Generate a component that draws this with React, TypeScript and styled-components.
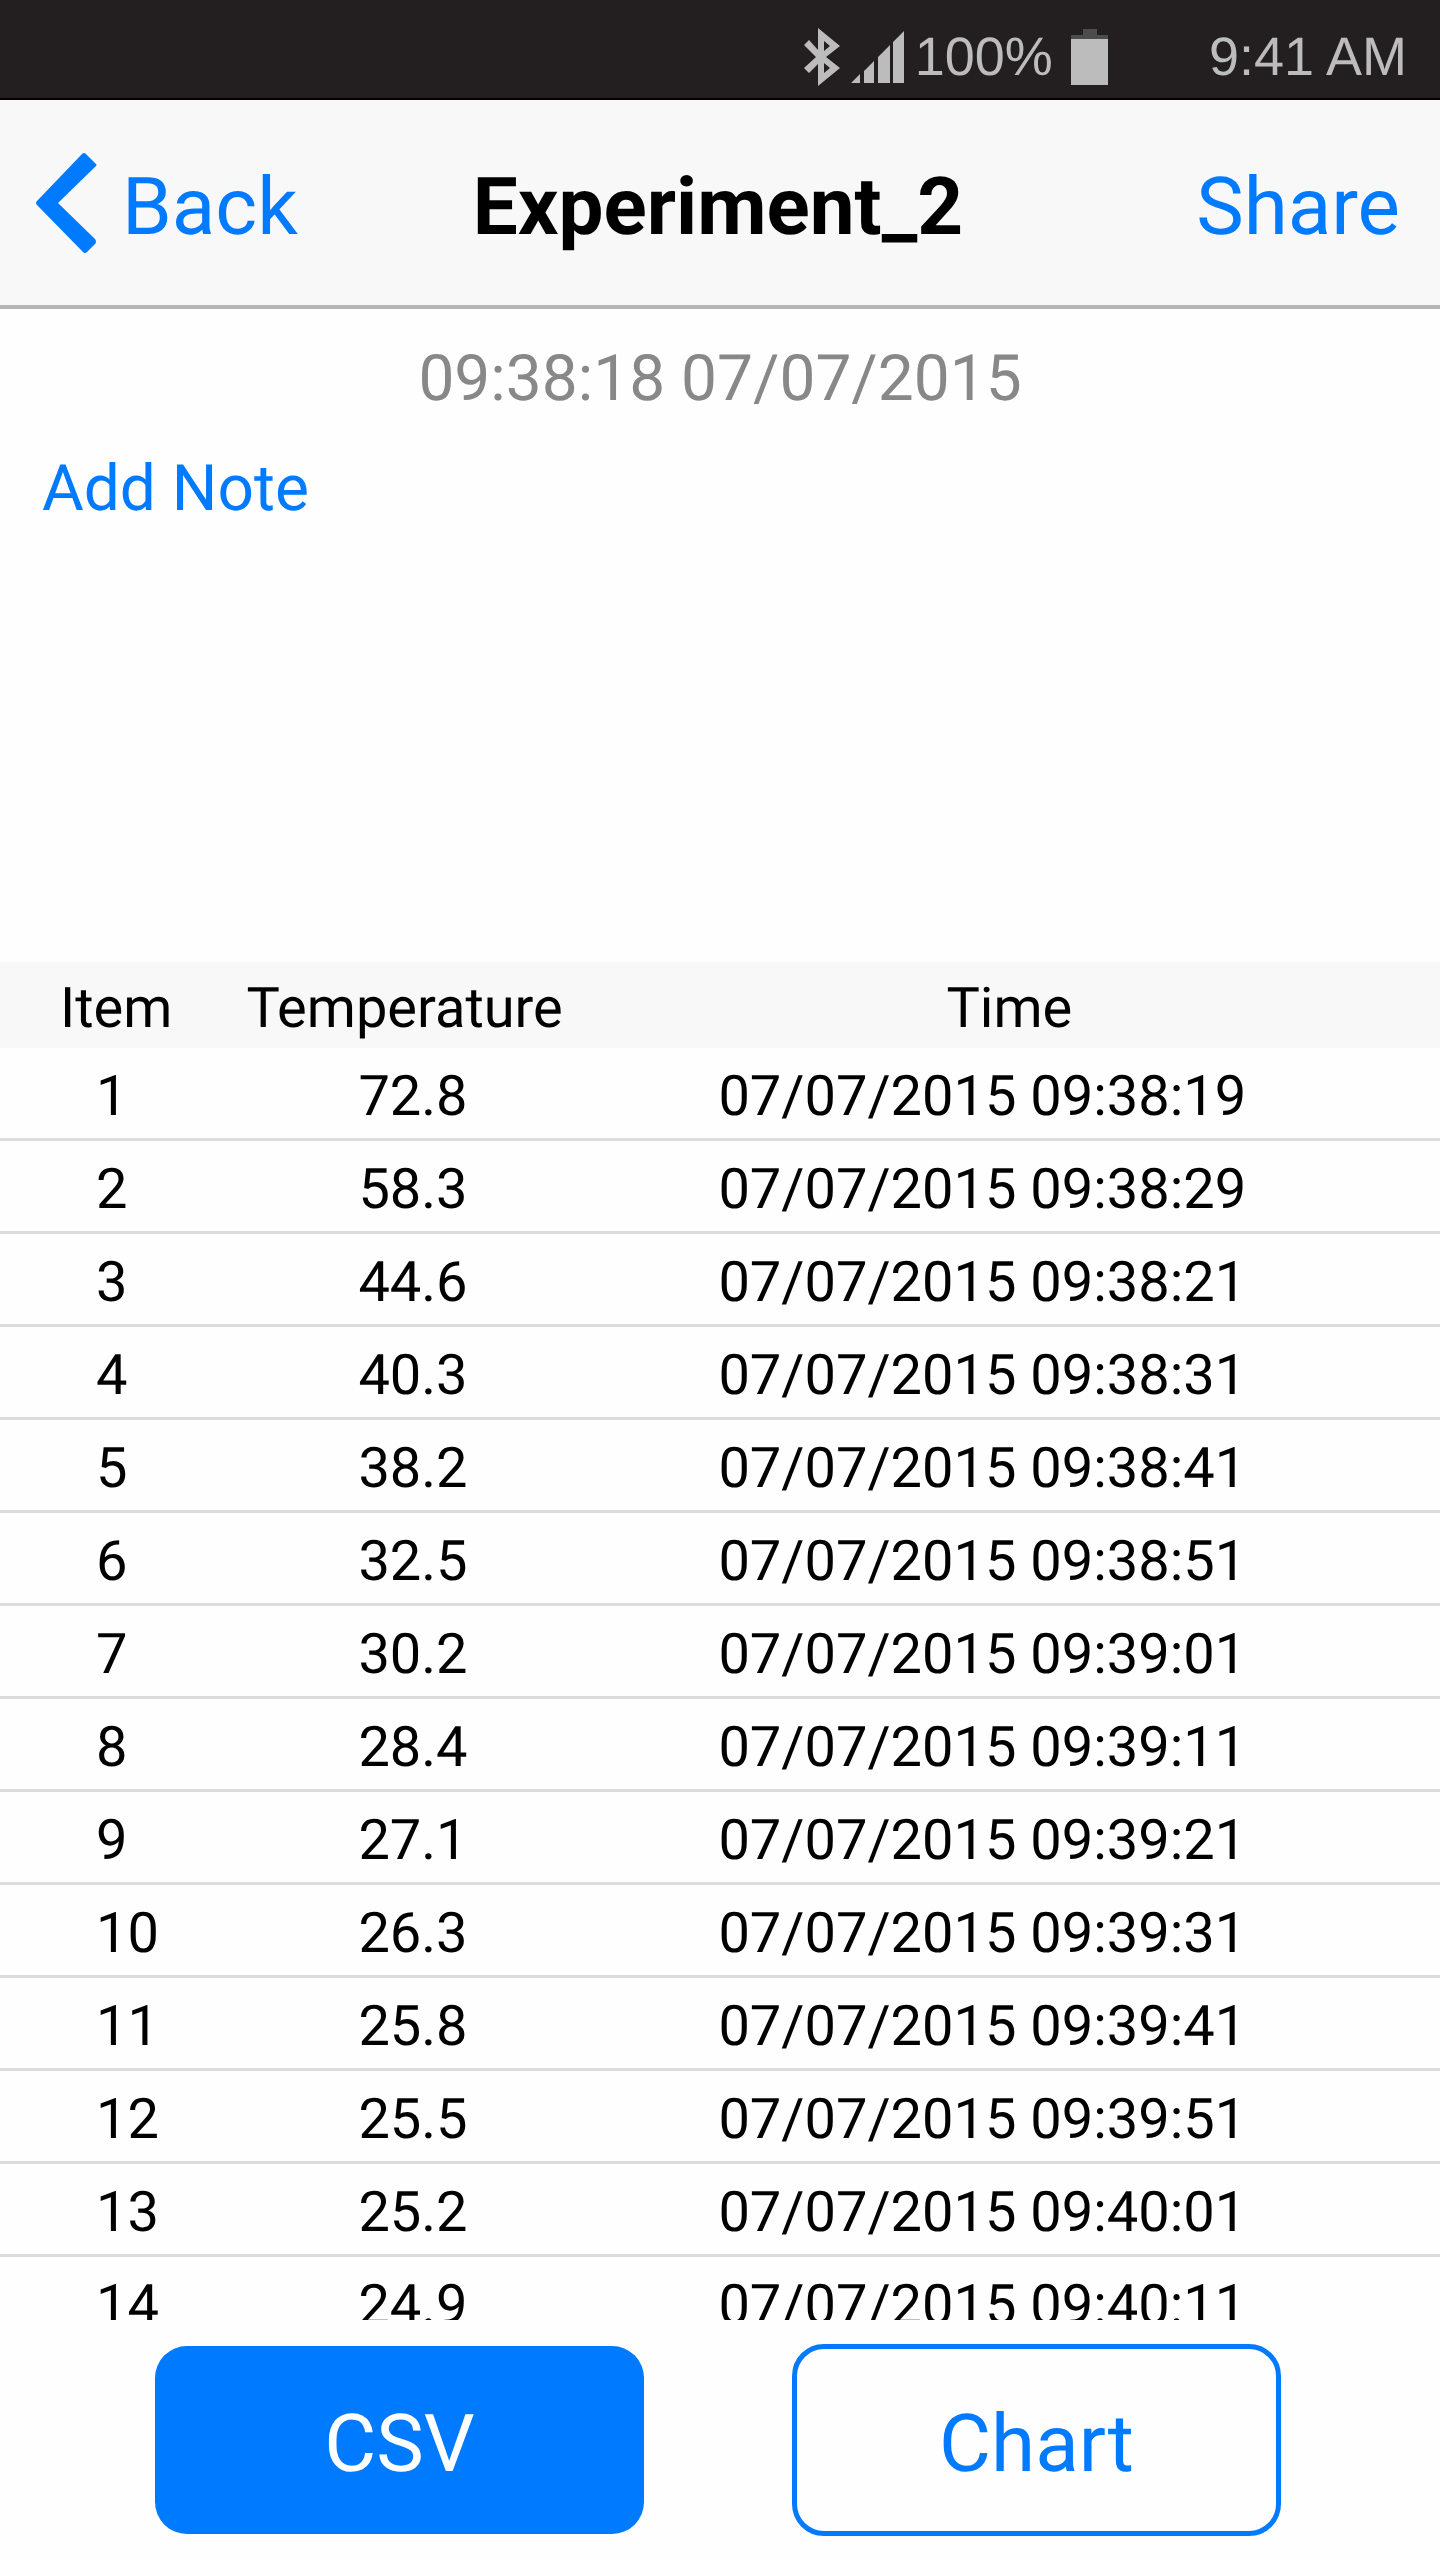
import React from "react";
import styled, { createGlobalStyle } from "styled-components";

const BLUE = "#007aff";

const GlobalStyle = createGlobalStyle`
  * { box-sizing: border-box; }
  body {
    margin: 0;
    background: #fefefe;
    color: #000;
    font-family: Roboto, "Liberation Sans", sans-serif;
    text-rendering: geometricPrecision;
  }
  button { font: inherit; text-rendering: inherit; padding: 0; border: 0; background: none; cursor: pointer; }
`;

const Screen = styled.div`
  display: flex;
  flex-direction: column;
  height: 100vh;
`;

const StatusBar = styled.div`
  display: flex;
  flex: none;
  align-items: center;
  justify-content: flex-end;
  gap: 11px;
  height: 100px;
  padding: 16px 33px 0 0;
  border-bottom: 2px solid #000;
  background: #231f20;
  color: #bcbcbc;
  font-family: "Liberation Sans", Arial, sans-serif;
  font-size: 54px;
  line-height: 60px;
  white-space: nowrap;
`;

const BatteryStatus = styled.div`
  display: flex;
  align-items: center;
  gap: 18px;
  margin-right: 90px;
`;

const Icon = styled.svg`
  display: block;
  flex: none;
`;

const NavBar = styled.header`
  display: grid;
  flex: none;
  grid-template-columns: 1fr auto 1fr;
  align-items: center;
  height: 209px;
  padding: 8px 40px 0 36px;
  border-bottom: 4px solid #b6b6b6;
  background: #f8f8f8;
  font-size: 80px;
  line-height: 96px;
`;

const Title = styled.h1`
  margin: 0;
  font-size: 80px;
  font-weight: 700;
`;

const NavButton = styled.button<{ $side: "start" | "end" }>`
  display: flex;
  align-items: center;
  gap: 24px;
  justify-self: ${(p) => p.$side};
  color: ${BLUE};
`;

const Chevron = styled(Icon)`
  margin-bottom: 8px;
`;

const Notes = styled.section`
  display: flex;
  flex: none;
  flex-direction: column;
  align-items: flex-start;
  gap: 34px;
  min-height: 653px;
  padding: 32px 42px;
  font-size: 64px;
  line-height: 76px;
`;

const Recorded = styled.time`
  align-self: center;
  color: #888;
`;

const AddNote = styled.button`
  color: ${BLUE};
`;

const Readings = styled.div`
  flex: 1;
  min-height: 0;
  overflow-y: auto;
  scrollbar-width: none;
`;

const Table = styled.table`
  width: 100%;
  table-layout: fixed;
  border-spacing: 0;
  font-size: 56px;
  text-align: left;
  white-space: nowrap;
`;

const HeadCell = styled.th<{ $width: string; $indent: number }>`
  position: sticky;
  top: 0;
  width: ${(p) => p.$width};
  padding: 6px 0 0 ${(p) => p.$indent}px;
  background: #f8f8f8;
  font-weight: 400;
  line-height: 80px;
`;

const Cell = styled.td<{ $indent: number }>`
  padding: 6px 0 0 ${(p) => p.$indent}px;
  border-bottom: 3px solid #dcdcdc;
  line-height: 84px;
`;

const Actions = styled.footer`
  display: grid;
  flex: none;
  grid-template-columns: 1fr 1fr;
  align-items: center;
  gap: 148px;
  padding: 24px 159px 24px 155px;
`;

const ActionButton = styled.button<{ $filled?: boolean }>`
  height: ${(p) => (p.$filled ? 188 : 192)}px;
  padding-top: 7px;
  border: ${(p) => (p.$filled ? "0" : `5px solid ${BLUE}`)};
  border-radius: 32px;
  background: ${(p) => (p.$filled ? BLUE : "transparent")};
  color: ${(p) => (p.$filled ? "#fff" : BLUE)};
  font-size: 80px;
  line-height: 96px;
`;

const readings: [string, string][] = [
  ["72.8", "09:38:19"],
  ["58.3", "09:38:29"],
  ["44.6", "09:38:21"],
  ["40.3", "09:38:31"],
  ["38.2", "09:38:41"],
  ["32.5", "09:38:51"],
  ["30.2", "09:39:01"],
  ["28.4", "09:39:11"],
  ["27.1", "09:39:21"],
  ["26.3", "09:39:31"],
  ["25.8", "09:39:41"],
  ["25.5", "09:39:51"],
  ["25.2", "09:40:01"],
  ["24.9", "09:40:11"],
];

const Bluetooth = () => (
  <Icon width="36" height="58" viewBox="0 0 36 58" fill="#bcbcbc" aria-hidden="true">
    <path
      fillRule="evenodd"
      d="M14 0L36 18L22 29L36 40L14 58V36L5 45L0 40L12 29L0 17L5 12L14 22ZM20 13V23L26 18ZM20 35V45L26 40Z"
    />
  </Icon>
);

const Signal = () => (
  <Icon width="53" height="52" viewBox="0 0 53 52" fill="#bcbcbc" aria-hidden="true">
    <path d="M0 52L9 43V52ZM13 52V40L23 30V52ZM27 52V26L39 14V52ZM42 52V11L53 0V52Z" />
  </Icon>
);

const Battery = () => (
  <Icon width="37" height="56" viewBox="0 0 37 56" aria-hidden="true">
    <path d="M12 0H26V6H37V10H0V6H12Z" fill="#4b4d4d" />
    <path d="M0 10H37V56H0Z" fill="#bcbcbc" />
  </Icon>
);

export default function App() {
  return (
    <Screen>
      <GlobalStyle />
      <StatusBar>
        <Bluetooth />
        <Signal />
        <BatteryStatus>
          <span>100%</span>
          <Battery />
        </BatteryStatus>
        <span>9:41 AM</span>
      </StatusBar>
      <NavBar>
        <NavButton type="button" $side="start">
          <Chevron width="62" height="100" viewBox="0 0 62 100" fill={BLUE} aria-hidden="true">
            <path d="M46 1Q48 -1 50 1L60 11Q61 12 60 13L22 50L59 86Q61 89 59 91L51 99Q49 101 47 99L1 52Q-1 50 1 48Z" />
          </Chevron>
          Back
        </NavButton>
        <Title>Experiment_2</Title>
        <NavButton type="button" $side="end">
          Share
        </NavButton>
      </NavBar>
      <Notes>
        <Recorded>09:38:18 07/07/2015</Recorded>
        <AddNote type="button">Add Note</AddNote>
      </Notes>
      <Readings>
        <Table>
          <thead>
            <tr>
              <HeadCell $width="16%" $indent={60}>Item</HeadCell>
              <HeadCell $width="30%" $indent={16}>Temperature</HeadCell>
              <HeadCell $width="54%" $indent={284}>Time</HeadCell>
            </tr>
          </thead>
          <tbody>
            {readings.map(([temperature, time], i) => (
              <tr key={i}>
                <Cell $indent={96}>{i + 1}</Cell>
                <Cell $indent={128}>{temperature}</Cell>
                <Cell $indent={56}>07/07/2015 {time}</Cell>
              </tr>
            ))}
          </tbody>
        </Table>
      </Readings>
      <Actions>
        <ActionButton type="button" $filled>
          CSV
        </ActionButton>
        <ActionButton type="button">Chart</ActionButton>
      </Actions>
    </Screen>
  );
}
